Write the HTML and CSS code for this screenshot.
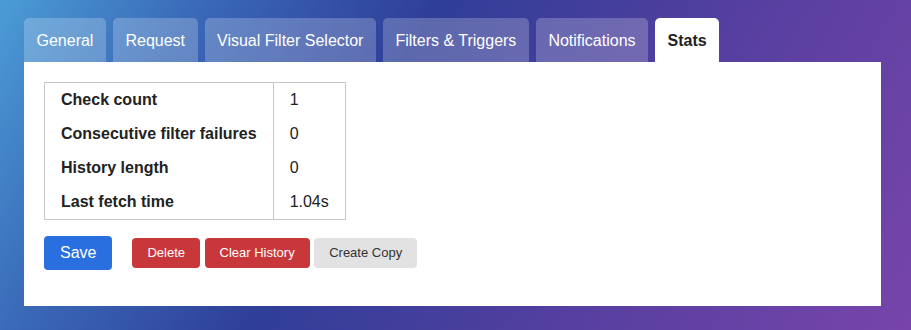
FILE: index.html
```html
<!DOCTYPE html>
<html lang="en">
<head>
  <meta charset="UTF-8" />
  <title>Edit watch - Stats</title>
  <link rel="stylesheet" href="styles.css">
</head>
<body>

  <div class="edit-form">
    <ul class="tabs">
      <li><a href="#general">General</a></li>
      <li><a href="#request">Request</a></li>
      <li><a href="#visual-selector">Visual Filter Selector</a></li>
      <li><a href="#filters-and-triggers">Filters &amp; Triggers</a></li>
      <li><a href="#notifications">Notifications</a></li>
      <li class="active"><a href="#stats">Stats</a></li>
    </ul>

    <div class="box-wrap" id="stats">
      <table class="stats-table">
        <tr><th>Check count</th><td>1</td></tr>
        <tr><th>Consecutive filter failures</th><td>0</td></tr>
        <tr><th>History length</th><td>0</td></tr>
        <tr><th>Last fetch time</th><td>1.04s</td></tr>
      </table>

      <div class="actions">
        <button type="submit" class="btn btn-save">Save</button>
        <a href="#" class="btn btn-small btn-error">Delete</a>
        <a href="#" class="btn btn-small btn-error">Clear History</a>
        <a href="#" class="btn btn-small btn-plain">Create Copy</a>
      </div>
    </div>
  </div>

</body>
</html>
```
FILE: styles.css
```css
html, body {
  margin: 0;
  height: 100%;
}
body {
  font-family: "Liberation Sans", Arial, Helvetica, sans-serif;
  font-size: 16px;
  color: #222;
  background: linear-gradient(120deg, #4b9cd6 0%, #3a6ab8 18%, #2f3e97 40%, #553fa0 68%, #7845aa 100%);
}
.edit-form {
  padding: 18px 30px 24px 24px;
}
.tabs {
  display: flex;
  gap: 7px;
  list-style: none;
  margin: 0;
  padding: 0;
}
.tabs li a {
  display: block;
  padding: 14px 12.5px 12px;
  line-height: 18px;
  color: #fff;
  text-decoration: none;
  background-color: rgba(255, 255, 255, 0.22);
  border-radius: 5px 5px 0 0;
}
.tabs li.active a {
  background-color: #fff;
  color: #222;
  font-weight: bold;
}
.box-wrap {
  background-color: #fff;
  padding: 20px 20px 36px;
}
.stats-table {
  border-collapse: collapse;
  border: 1px solid #c8c8c8;
}
.stats-table th,
.stats-table td {
  padding: 8px 16px;
  line-height: 18px;
  text-align: left;
}
.stats-table td {
  border-left: 1px solid #c8c8c8;
}
.actions {
  display: flex;
  align-items: center;
  gap: 4.5px;
  margin-top: 16px;
}
.btn {
  display: inline-block;
  border: none;
  border-radius: 4px;
  color: #fff;
  font-family: inherit;
  text-decoration: none;
  cursor: pointer;
}
.btn-save {
  background-color: #2a6fe0;
  font-size: 16px;
  line-height: 18px;
  padding: 8px 16px;
  margin-right: 15.5px;
}
.btn-small {
  font-size: 13px;
  line-height: 16px;
  padding: 7px 15px;
}
.btn-error {
  background-color: #c8383a;
}
.btn-plain {
  background-color: #e2e2e2;
  color: #333;
}
```
